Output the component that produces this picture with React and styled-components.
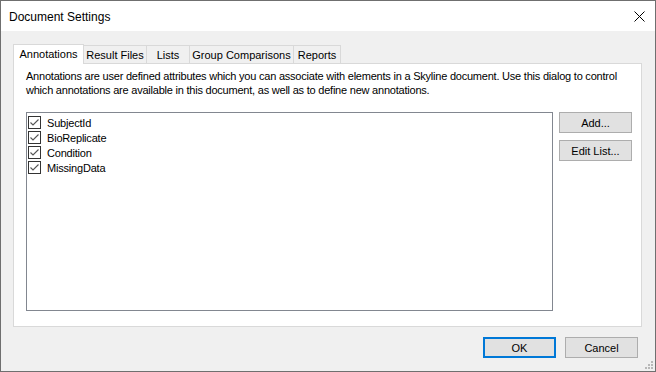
import React from "react";
import styled, { createGlobalStyle } from "styled-components";

const GlobalStyle = createGlobalStyle`
  html, body {
    margin: 0;
    padding: 0;
    background: #f0f0f0;
  }
  * {
    box-sizing: border-box;
  }
`;

const Window = styled.div`
  width: 656px;
  height: 372px;
  border: 1px solid #6f6f6f;
  background: #f0f0f0;
  display: flex;
  flex-direction: column;
  font-family: "Liberation Sans", Arial, sans-serif;
  font-size: 11px;
  color: #000;
  position: relative;
`;

const TitleBar = styled.div`
  height: 30px;
  background: #fff;
  display: flex;
  align-items: center;
  justify-content: space-between;
  padding: 0 0 0 8px;
`;

const Title = styled.span`
  font-size: 12px;
  color: #000;
  padding-top: 1px;
`;

const CloseButton = styled.div`
  width: 46px;
  height: 30px;
  display: flex;
  align-items: center;
  justify-content: center;
  padding-left: 15px;
  padding-top: 1px;
`;

const Body = styled.div`
  flex: 1;
  display: flex;
  flex-direction: column;
  padding: 12px 13px 0 12px;
`;

const TabStrip = styled.div`
  display: flex;
  align-items: flex-end;
  height: 20px;
`;

const Tab = styled.div`
  width: ${(p) => p.$w}px;
  height: ${(p) => (p.$active ? 20 : 18)}px;
  border: 1px solid #d9d9d9;
  border-bottom: none;
  border-left: ${(p) => (p.$first || p.$active ? "1px solid #d9d9d9" : "none")};
  background: ${(p) => (p.$active ? "#fff" : "#f0f0f0")};
  display: flex;
  align-items: center;
  justify-content: center;
  padding-bottom: ${(p) => (p.$active ? 2 : 0)}px;
  position: relative;
  z-index: ${(p) => (p.$active ? 1 : 0)};
  margin-bottom: ${(p) => (p.$active ? -1 : 0)}px;
  white-space: nowrap;
`;

const Panel = styled.div`
  width: 629px;
  height: 264px;
  background: #fff;
  border: 1px solid #d9d9d9;
  display: flex;
  flex-direction: column;
  padding: 5px 0 0 12px;
`;

const Description = styled.p`
  margin: 0;
  line-height: 14px;
  letter-spacing: -0.22px;
  white-space: nowrap;
`;

const ContentRow = styled.div`
  display: flex;
  gap: 6px;
  margin-top: 15px;
`;

const ListBox = styled.div`
  width: 527px;
  height: 199px;
  border: 1px solid #828790;
  background: #fff;
  padding: 2px 0 0 1px;
  display: flex;
  flex-direction: column;
`;

const ListItem = styled.label`
  height: 15px;
  display: flex;
  align-items: center;
  gap: 6px;
  letter-spacing: -0.2px;
`;

const Buttons = styled.div`
  display: flex;
  flex-direction: column;
  gap: 7px;
`;

const Button = styled.div`
  width: ${(p) => p.$w || 73}px;
  height: 21px;
  background: #e1e1e1;
  border: ${(p) => (p.$default ? "2px solid #0078d7" : "1px solid #adadad")};
  display: flex;
  align-items: center;
  justify-content: center;
  white-space: nowrap;
`;

const Footer = styled.div`
  display: flex;
  justify-content: flex-end;
  gap: 9px;
  padding: 10px 4px 0 0;
`;

const Grip = styled.div`
  position: absolute;
  right: 1px;
  bottom: 1px;
  width: 10px;
  height: 10px;
`;

function CheckBox() {
  return (
    <svg width="13" height="13" viewBox="0 0 13 13">
      <rect x="0.5" y="0.5" width="12" height="12" fill="#fff" stroke="#333" />
      <path d="M2.5 6.5 L5 9 L10.5 3.5" fill="none" stroke="#555" strokeWidth="1.1" />
    </svg>
  );
}

const tabs = [
  { label: "Annotations", w: 71 },
  { label: "Result Files", w: 63 },
  { label: "Lists", w: 43 },
  { label: "Group Comparisons", w: 104 },
  { label: "Reports", w: 47 },
];

const items = ["SubjectId", "BioReplicate", "Condition", "MissingData"];

export default function App() {
  return (
    <>
      <GlobalStyle />
      <Window>
        <TitleBar>
          <Title>Document Settings</Title>
          <CloseButton>
            <svg width="11" height="11" viewBox="0 0 11 11">
              <path d="M0.5 0.5 L10.5 10.5 M10.5 0.5 L0.5 10.5" stroke="#000" strokeWidth="1" />
            </svg>
          </CloseButton>
        </TitleBar>
        <Body>
          <TabStrip>
            {tabs.map((t, i) => (
              <Tab key={t.label} $w={t.w} $active={i === 0} $first={i === 0}>
                {t.label}
              </Tab>
            ))}
          </TabStrip>
          <Panel>
            <Description>
              Annotations are user defined attributes which you can associate with elements in a Skyline document. Use this dialog to control
              <br />
              which annotations are available in this document, as well as to define new annotations.
            </Description>
            <ContentRow>
              <ListBox>
                {items.map((it) => (
                  <ListItem key={it}>
                    <CheckBox />
                    <span>{it}</span>
                  </ListItem>
                ))}
              </ListBox>
              <Buttons>
                <Button $w={73}>Add...</Button>
                <Button $w={73}>Edit List...</Button>
              </Buttons>
            </ContentRow>
          </Panel>
          <Footer>
            <Button $default>OK</Button>
            <Button>Cancel</Button>
          </Footer>
        </Body>
        <Grip>
          <svg width="10" height="10" viewBox="0 0 10 10">
            {[[7, 1], [4, 4], [7, 4], [1, 7], [4, 7], [7, 7]].map(([x, y]) => (
              <rect key={`${x}-${y}`} x={x} y={y} width="2" height="2" fill="#b8b8b8" />
            ))}
          </svg>
        </Grip>
      </Window>
    </>
  );
}
